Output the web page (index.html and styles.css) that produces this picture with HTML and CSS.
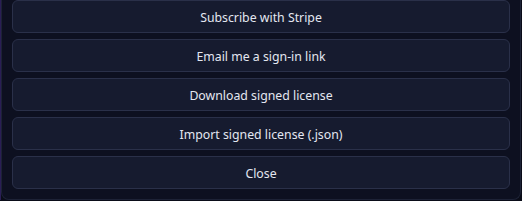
FILE: index.html
```html
<!DOCTYPE html>
<html lang="en">
<head>
    <meta charset="UTF-8">
    <title>License</title>
    <link rel="stylesheet" href="styles.css">
</head>
<body>
    <div class="panel">
        <button class="btn">Subscribe with Stripe</button>
        <button class="btn">Email me a sign-in link</button>
        <button class="btn">Download signed license</button>
        <button class="btn">Import signed license (.json)</button>
        <button class="btn">Close</button>
    </div>
</body>
</html>
```
FILE: styles.css
```css
body {
    margin: 0;
    background-color: #0a0c18;
    border-left: 1px solid #2a1e55;
    font-family: "Noto Sans", "Open Sans", sans-serif;
}
.panel {
    display: flex;
    flex-direction: column;
    gap: 6px;
    margin-right: 1px;
    padding: 0 10px 10px 10px;
    background-color: #0d1020;
    border: 1px solid #1d2236;
    border-top: none;
    border-radius: 0 0 8px 8px;
}
.btn {
    height: 33px;
    padding: 1px 0 0 0;
    background-color: #161b2f;
    color: #e4e7f1;
    border: 1px solid #2a3049;
    border-radius: 6px;
    font-family: inherit;
    font-size: 12.3px;
    cursor: pointer;
}
```
